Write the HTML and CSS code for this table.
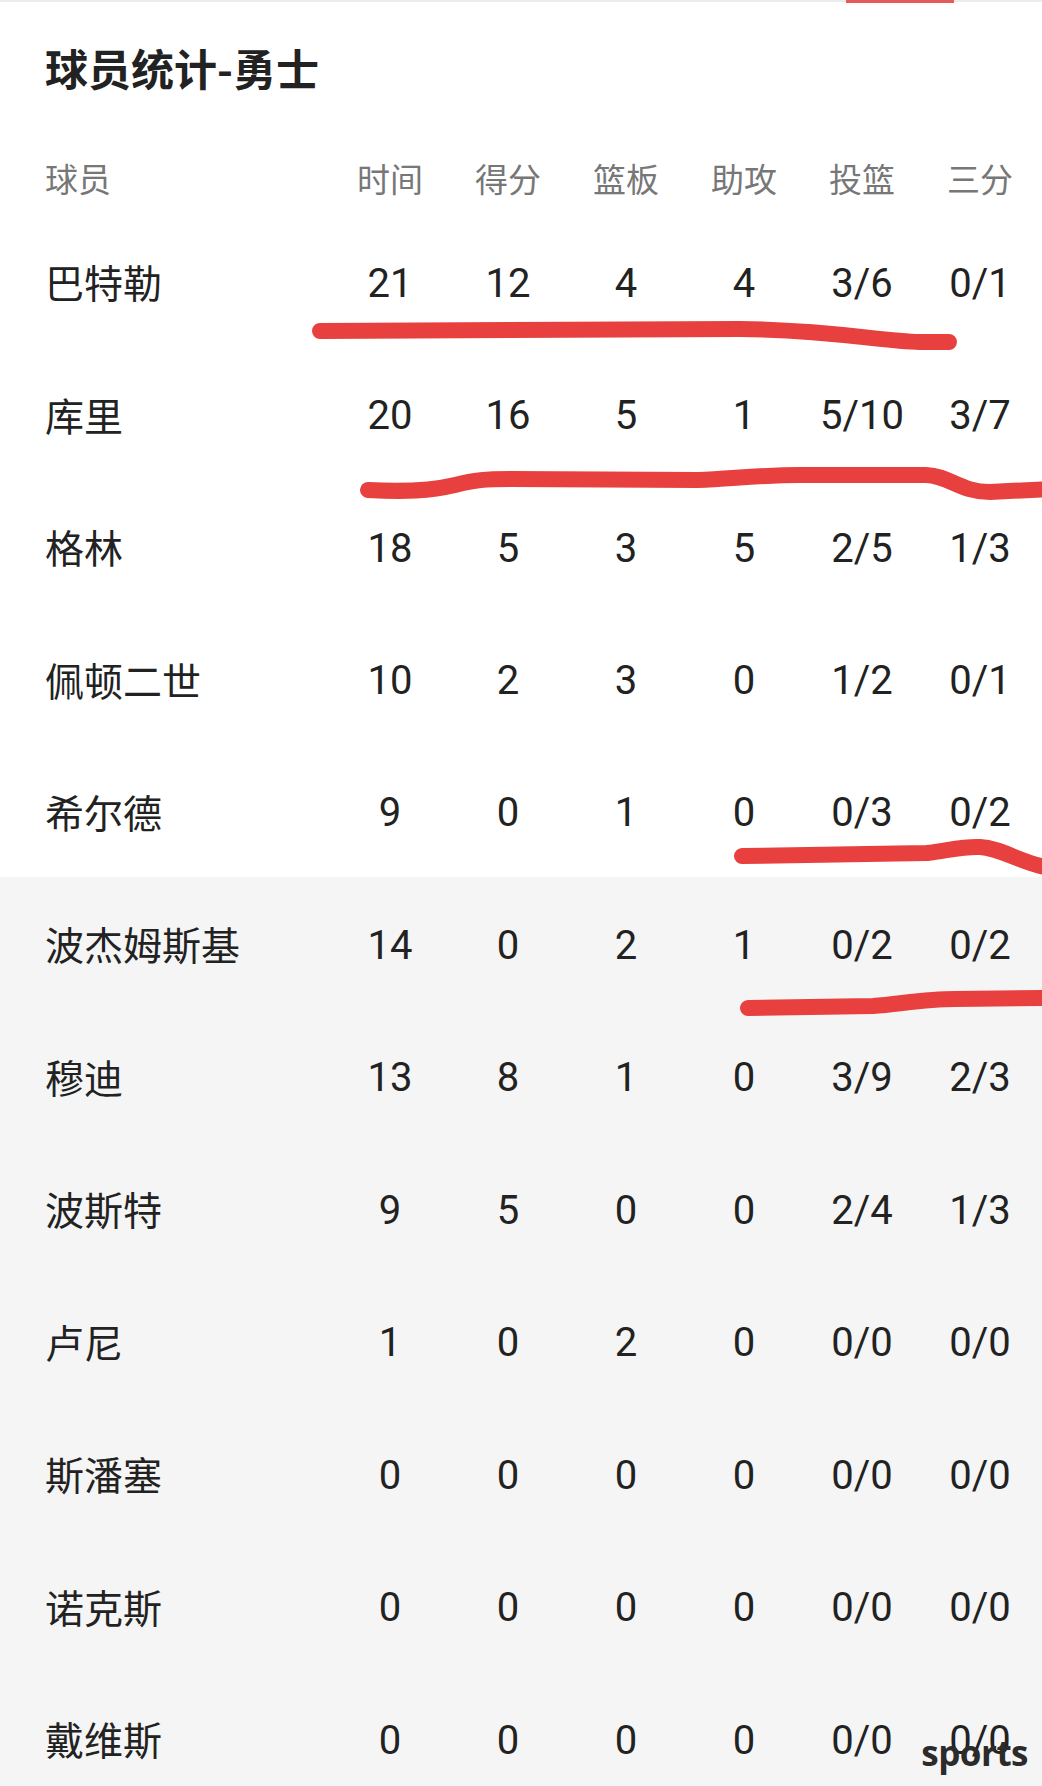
FILE: index.html
```html
<!DOCTYPE html>
<html lang="zh-CN">
<head>
    <meta charset="UTF-8">
    <meta name="viewport" content="width=device-width, initial-scale=1.0">
    <title>球员统计-勇士</title>
    <link rel="stylesheet" href="styles.css">
</head>
<body>
    <div class="top-bar"><span class="tab-line"></span></div>
    <h1 class="title">球员统计-勇士</h1>

    <div class="stats">
        <div class="row head">
            <span class="name">球员</span>
            <span>时间</span><span>得分</span><span>篮板</span><span>助攻</span><span>投篮</span><span>三分</span>
        </div>
        <div class="group starters">
            <div class="row"><span class="name">巴特勒</span><span>21</span><span>12</span><span>4</span><span>4</span><span>3/6</span><span>0/1</span></div>
            <div class="row"><span class="name">库里</span><span>20</span><span>16</span><span>5</span><span>1</span><span>5/10</span><span>3/7</span></div>
            <div class="row"><span class="name">格林</span><span>18</span><span>5</span><span>3</span><span>5</span><span>2/5</span><span>1/3</span></div>
            <div class="row"><span class="name">佩顿二世</span><span>10</span><span>2</span><span>3</span><span>0</span><span>1/2</span><span>0/1</span></div>
            <div class="row"><span class="name">希尔德</span><span>9</span><span>0</span><span>1</span><span>0</span><span>0/3</span><span>0/2</span></div>
        </div>
        <div class="group bench">
            <div class="row"><span class="name">波杰姆斯基</span><span>14</span><span>0</span><span>2</span><span>1</span><span>0/2</span><span>0/2</span></div>
            <div class="row"><span class="name">穆迪</span><span>13</span><span>8</span><span>1</span><span>0</span><span>3/9</span><span>2/3</span></div>
            <div class="row"><span class="name">波斯特</span><span>9</span><span>5</span><span>0</span><span>0</span><span>2/4</span><span>1/3</span></div>
            <div class="row"><span class="name">卢尼</span><span>1</span><span>0</span><span>2</span><span>0</span><span>0/0</span><span>0/0</span></div>
            <div class="row"><span class="name">斯潘塞</span><span>0</span><span>0</span><span>0</span><span>0</span><span>0/0</span><span>0/0</span></div>
            <div class="row"><span class="name">诺克斯</span><span>0</span><span>0</span><span>0</span><span>0</span><span>0/0</span><span>0/0</span></div>
            <div class="row"><span class="name">戴维斯</span><span>0</span><span>0</span><span>0</span><span>0</span><span>0/0</span><span>0/0</span></div>
        </div>
    </div>

    <!-- hand-drawn marks on top of the table -->
    <svg class="marks" width="1042" height="1786" viewBox="0 0 1042 1786">
        <g fill="none" stroke="#e8403f" stroke-width="16" stroke-linecap="round" stroke-linejoin="round">
            <path d="M320 331 L740 329 C830 330 880 341 920 342 L949 342"/>
            <path d="M368 490 C405 492 430 491 455 485 C475 480 485 479 510 479 L698 480 C730 479 760 475 800 475 L926 475 C950 476 960 492 990 492 L1050 489"/>
            <path d="M742 856 L927 853 C950 850 965 846 980 847 C1000 848 1020 862 1045 867"/>
            <path d="M748 1008 L873 1006 C900 1004 925 999 955 999 L1050 998"/>
        </g>
    </svg>

    <div class="watermark">sports</div>
</body>
</html>
```

FILE: styles.css
```css
body {
    margin: 0;
    background: #fff;
    color: #222;
    font-family: Roboto, "Noto Sans CJK SC", sans-serif;
    position: relative;
    overflow: hidden;
    height: 1786px;
}
.top-bar {
    height: 2px;
    background: #ececec;
    display: flex;
}
.tab-line {
    margin-left: 846px;
    width: 108px;
    height: 3px;
    background: #e35b5b;
}
.title {
    margin: 0 0 49px;
    padding: 40px 45px 0;
    font-size: 43px;
    line-height: 50px;
    font-weight: 700;
    color: #222;
    font-family: "Noto Sans CJK SC", sans-serif;
}
.stats {
    display: flex;
    flex-direction: column;
}
.row {
    display: grid;
    grid-template-columns: 286px repeat(6, 118px);
    align-items: center;
    padding-left: 45px;
    height: 132.45px;
    font-size: 40px;
    text-align: center;
}
.row > span {
    padding-top: 4px;
}
.row .name {
    padding-top: 0;
    text-align: left;
    font-family: "Noto Sans CJK SC", sans-serif;
    font-size: 39px;
}
.row.head {
    height: 74px;
    font-size: 33px;
    color: #777;
    font-family: "Noto Sans CJK SC", sans-serif;
}
.row.head > span {
    padding-top: 0;
}
.row.head .name {
    font-size: 33px;
}
.bench {
    background: #f5f5f5;
}
.marks {
    position: absolute;
    top: 0;
    left: 0;
    pointer-events: none;
}
.watermark {
    position: absolute;
    top: 1733px;
    right: 14px;
    font-family: "Open Sans", sans-serif;
    font-weight: 700;
    font-size: 35px;
    line-height: 40px;
    color: #2b2b2b;
    letter-spacing: -0.5px;
}
```
